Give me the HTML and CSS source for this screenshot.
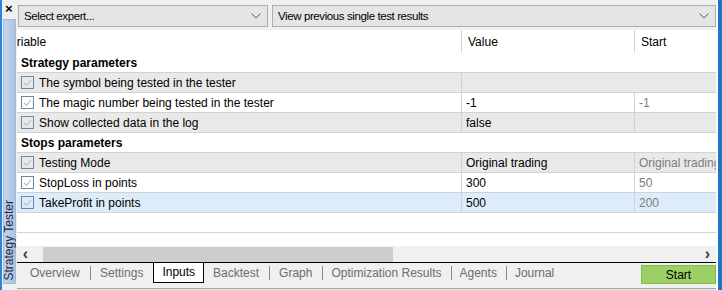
FILE: index.html
```html
<!DOCTYPE html>
<html>
<head>
<meta charset="utf-8">
<link rel="stylesheet" href="styles.css">
</head>
<body>
<div class="window">
  <div class="edge-l"></div>
  <aside class="side">
    <div class="close">×</div>
    <div class="vtab"><span class="vtab-label">Strategy Tester</span></div>
  </aside>
  <main class="main">
    <div class="toolbar">
      <div class="combo combo-expert"><span class="combo-text">Select expert...</span><svg class="chev" width="10" height="6" viewBox="0 0 10 6"><path d="M0.5 0.5 L5 5 L9.5 0.5" fill="none" stroke="#606060" stroke-width="1"/></svg></div>
      <div class="combo combo-results"><span class="combo-text">View previous single test results</span><svg class="chev" width="10" height="6" viewBox="0 0 10 6"><path d="M0.5 0.5 L5 5 L9.5 0.5" fill="none" stroke="#606060" stroke-width="1"/></svg></div>
    </div>
    <div class="grid">
      <div class="row head">
        <div class="cell c1"><span class="clip-var">Variable</span></div>
        <div class="cell c2">Value</div>
        <div class="cell c3">Start</div>
      </div>
      <div class="row section"><div class="cell full">Strategy parameters</div></div>
      <div class="row alt">
        <div class="cell c1"><span class="cb"><svg width="9" height="8" viewBox="0 0 9 8"><path d="M1 4 L3.5 6.5 L8 1" fill="none" stroke="#b9b9b9" stroke-width="1.1"/></svg></span>The symbol being tested in the tester</div>
        <div class="cell c23"></div>
      </div>
      <div class="row">
        <div class="cell c1"><span class="cb"><svg width="9" height="8" viewBox="0 0 9 8"><path d="M1 4 L3.5 6.5 L8 1" fill="none" stroke="#b9b9b9" stroke-width="1.1"/></svg></span>The magic number being tested in the tester</div>
        <div class="cell c2">-1</div>
        <div class="cell c3 muted">-1</div>
      </div>
      <div class="row alt">
        <div class="cell c1"><span class="cb"><svg width="9" height="8" viewBox="0 0 9 8"><path d="M1 4 L3.5 6.5 L8 1" fill="none" stroke="#b9b9b9" stroke-width="1.1"/></svg></span>Show collected data in the log</div>
        <div class="cell c2">false</div>
        <div class="cell c3 muted"></div>
      </div>
      <div class="row section"><div class="cell full">Stops parameters</div></div>
      <div class="row alt">
        <div class="cell c1"><span class="cb"><svg width="9" height="8" viewBox="0 0 9 8"><path d="M1 4 L3.5 6.5 L8 1" fill="none" stroke="#b9b9b9" stroke-width="1.1"/></svg></span>Testing Mode</div>
        <div class="cell c2">Original trading</div>
        <div class="cell c3 muted">Original trading</div>
      </div>
      <div class="row">
        <div class="cell c1"><span class="cb"><svg width="9" height="8" viewBox="0 0 9 8"><path d="M1 4 L3.5 6.5 L8 1" fill="none" stroke="#b9b9b9" stroke-width="1.1"/></svg></span>StopLoss in points</div>
        <div class="cell c2">300</div>
        <div class="cell c3 muted">50</div>
      </div>
      <div class="row selected">
        <div class="cell c1"><span class="cb"><svg width="9" height="8" viewBox="0 0 9 8"><path d="M1 4 L3.5 6.5 L8 1" fill="none" stroke="#b9b9b9" stroke-width="1.1"/></svg></span>TakeProfit in points</div>
        <div class="cell c2">500</div>
        <div class="cell c3 muted">200</div>
      </div>
      <div class="row empty"><div class="cell full"></div></div>
    </div>
    <div class="hscroll">
      <span class="arrow">&lsaquo;</span>
      <div class="track"><div class="thumb"></div></div>
      <span class="arrow">&rsaquo;</span>
    </div>
    <div class="tabbar">
      <div class="tabs">
        <span class="tab">Overview</span><span class="sep"></span>
        <span class="tab">Settings</span>
        <span class="tab active">Inputs</span>
        <span class="tab">Backtest</span><span class="sep"></span>
        <span class="tab">Graph</span><span class="sep"></span>
        <span class="tab">Optimization Results</span><span class="sep"></span>
        <span class="tab">Agents</span><span class="sep"></span>
        <span class="tab">Journal</span>
      </div>
      <button class="start">Start</button>
    </div>
    <div class="foot"></div>
  </main>
  <div class="edge-r"></div>
</div>
</body>
</html>
```
FILE: styles.css
```css
* { box-sizing: border-box; }
html, body { margin: 0; padding: 0; }
body {
  width: 722px;
  height: 290px;
  overflow: hidden;
  font-family: "Liberation Sans", Arial, sans-serif;
  font-size: 12px;
  color: #000;
  background: #f0f0f0;
}
.window {
  display: flex;
  height: 290px;
}
.edge-l { width: 2px; background: #2b86d9; }
.edge-r { background: #1f74c6; border-left: 2px solid #fbfbfb; width: 6px; }
.side {
  width: 15px;
  display: flex;
  flex-direction: column;
  background: #f0f0f0;
}
.close {
  height: 19px;
  font-weight: bold;
  font-size: 13px;
  line-height: 18px;
  padding-left: 3px;
}
.vtab {
  margin-left: 1px;
  width: 13px;
  height: 265px;
  background: linear-gradient(to right, #c4d6ee, #aec3df);
  border: 1px solid #a3b8d6;
  display: flex;
  align-items: flex-end;
  justify-content: center;
}
.vtab-label {
  writing-mode: vertical-rl;
  transform: rotate(180deg);
  font-size: 12px;
  color: #1b2a44;
  line-height: 11px;
  padding-top: 3px;
}
.main {
  flex: 1;
  display: flex;
  flex-direction: column;
  min-width: 0;
}
.toolbar {
  height: 30px;
  display: flex;
  gap: 4px;
  padding: 5px 0 3px 1px;
}
.combo {
  height: 22px;
  background: #e5e5e5;
  border: 1px solid #adadad;
  display: flex;
  align-items: center;
  justify-content: space-between;
  padding: 0 6px 0 5px;
}
.combo-text { font-size: 11.5px; letter-spacing: -0.4px; }
.combo-expert { width: 250px; }
.combo-results { flex: 1; }
.grid {
  height: 216px;
  background: #fff;
  overflow: hidden;
}
.row {
  display: flex;
  height: 20px;
  border-bottom: 1px solid #d2d2d2;
}
.row.head { height: 23px; border-bottom: none; }
.row.alt { background: #e9e9e9; }
.row.selected { background: #ddecfb; }
.cell {
  display: flex;
  align-items: center;
  white-space: nowrap;
  overflow: hidden;
  padding-left: 4px;
}
.c1 { width: 444px; padding-left: 4px; }
.c2 { width: 173px; border-left: 1px solid #d2d2d2; }
.c3 { width: 82px; border-left: 1px solid #d2d2d2; }
.c23 { width: 255px; border-left: 1px solid #d2d2d2; }
.full { width: 699px; font-weight: bold; }
.head .cell { padding-left: 6px; }
.head .c1 { padding-left: 0; }
.clip-var { margin-left: -14px; }
.muted { color: #7c7c7c; }
.cb {
  width: 13px;
  height: 13px;
  border: 1px solid #6a88ae;
  display: inline-flex;
  align-items: center;
  justify-content: center;
  margin-right: 5px;
  flex: none;
}
.hscroll {
  height: 16px;
  display: flex;
  align-items: center;
  background: #f0f0f0;
}
.arrow { width: 17px; text-align: center; font-size: 16px; font-weight: bold; line-height: 14px; color: #3a3a3a; }
.track { flex: 1; height: 15px; }
.thumb { margin-left: 9px; width: 350px; height: 15px; background: #cdcdcd; }
.tabbar {
  height: 23px;
  border-top: 1px solid #000;
  display: flex;
  justify-content: space-between;
  align-items: flex-start;
}
.tabs {
  display: flex;
  align-items: center;
  height: 19px;
  padding-left: 4px;
}
.tab {
  padding: 0 10px 0 9px;
  color: #6d6d6d;
  line-height: 18px;
}
.tab:nth-child(n+9) { padding: 0 9px 0 8px; }
.tab.active {
  background: #fff;
  color: #000;
  border: 1px solid #000;
  border-top: none;
  height: 20px;
  line-height: 18px;
  padding: 0 8px;
}
.sep { width: 1px; height: 14px; background: #8a8a8a; }
.start {
  margin-top: 2px;
  width: 75px;
  height: 19px;
  background: #9ccf64;
  border: 1px solid #82bb55;
  font-family: inherit;
  font-size: 12px;
  color: #000;
  padding: 0;
}
.foot { height: 5px; background: linear-gradient(#f0f0f0 0, #f0f0f0 3px, #a8a8a8 3px, #a8a8a8 4px, #e4e4e4 4px); }
```
